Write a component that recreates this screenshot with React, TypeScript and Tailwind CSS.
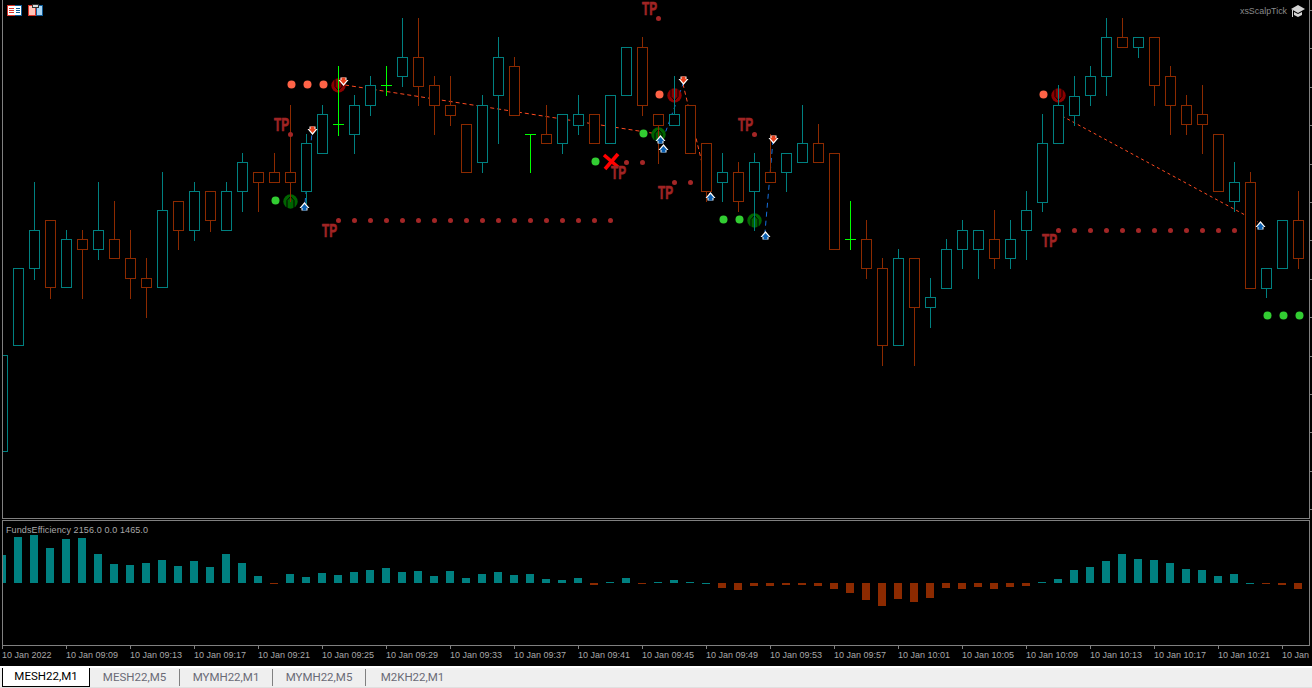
import React from "react";

const T = "#008080";
const R = "#8c2a00";
const G = "#00ff00";

// [colour, high, top, bottom, low]; index i gives centre x = 2 + 16 * i
const candles: [string, number, number, number, number][] = [
  [T, 355, 355, 451, 451],
  [T, 268, 268, 345, 345],
  [T, 182, 230, 268, 279],
  [R, 220, 220, 287, 298],
  [T, 230, 239, 287, 287],
  [R, 230, 239, 249, 298],
  [T, 182, 230, 249, 259],
  [R, 201, 239, 258, 258],
  [R, 230, 258, 278, 298],
  [R, 258, 278, 287, 317],
  [T, 172, 210, 287, 287],
  [R, 201, 201, 230, 249],
  [T, 182, 191, 230, 240],
  [R, 191, 191, 220, 231],
  [T, 182, 191, 230, 230],
  [T, 153, 162, 191, 211],
  [R, 172, 172, 182, 211],
  [R, 153, 172, 182, 182],
  [R, 105, 172, 182, 201],
  [T, 134, 143, 191, 203],
  [T, 105, 114, 153, 153],
  [G, 66, 124, 124, 135],
  [T, 95, 105, 134, 153],
  [T, 76, 85, 105, 115],
  [G, 66, 85, 85, 95],
  [T, 18, 57, 76, 86],
  [R, 18, 57, 86, 105],
  [R, 76, 85, 105, 134],
  [R, 76, 105, 115, 125],
  [R, 124, 124, 172, 172],
  [T, 95, 105, 162, 172],
  [T, 37, 57, 95, 143],
  [R, 57, 66, 115, 115],
  [G, 134, 134, 134, 172],
  [R, 105, 134, 143, 143],
  [T, 114, 114, 143, 153],
  [T, 95, 114, 125, 134],
  [R, 114, 114, 143, 143],
  [T, 95, 95, 143, 143],
  [T, 47, 47, 95, 95],
  [R, 37, 47, 105, 115],
  [R, 114, 114, 125, 163],
  [T, 76, 114, 125, 125],
  [R, 105, 105, 153, 153],
  [R, 143, 143, 191, 201],
  [T, 153, 172, 182, 201],
  [R, 162, 172, 201, 211],
  [T, 153, 162, 191, 230],
  [R, 134, 172, 182, 182],
  [T, 153, 153, 172, 191],
  [T, 105, 143, 162, 162],
  [R, 124, 143, 162, 162],
  [R, 153, 153, 249, 249],
  [G, 201, 239, 239, 249],
  [R, 220, 239, 268, 278],
  [R, 258, 268, 345, 365],
  [T, 249, 258, 345, 345],
  [R, 258, 258, 307, 365],
  [T, 278, 297, 307, 327],
  [T, 239, 249, 288, 288],
  [T, 220, 230, 249, 268],
  [T, 230, 230, 249, 278],
  [R, 210, 239, 258, 268],
  [T, 220, 239, 258, 268],
  [T, 191, 210, 230, 259],
  [T, 114, 143, 202, 211],
  [T, 85, 105, 143, 143],
  [T, 76, 96, 115, 125],
  [T, 66, 76, 95, 105],
  [T, 18, 37, 76, 95],
  [R, 18, 37, 47, 47],
  [T, 37, 37, 47, 57],
  [R, 37, 37, 85, 105],
  [R, 66, 76, 105, 134],
  [R, 95, 105, 124, 134],
  [R, 85, 114, 124, 153],
  [R, 134, 134, 191, 191],
  [T, 162, 182, 201, 211],
  [R, 172, 182, 288, 288],
  [T, 268, 268, 288, 297],
  [T, 220, 220, 268, 268],
  [R, 191, 220, 258, 268],
];

// Signed bar heights around the zero line of the lower pane
const bars = [
  28, 46, 48, 35, 44, 45, 29, 19, 18, 20, 23, 17, 22, 16, 29, 20, 7, -1, 9, 6, 10, 8, 11, 13, 15, 11, 12, 7, 12, 5, 9,
  11, 8, 9, 4, 3, 5, -2, 1, 5, -1, 1, 3, 1, 0.5, -5, -7, -3, -3, -2, -2, -3, -6, -10, -17, -23, -16, -19, -15, -5, -6,
  -4, -6, -4, -3, 1, 4, 13, 16, 22, 29, 24, 23, 20, 14, 13, 7, 9, 0.5, -1, -2, -6,
];

const timeLabels = [
  "10 Jan 2022", "10 Jan 09:09", "10 Jan 09:13", "10 Jan 09:17", "10 Jan 09:21", "10 Jan 09:25", "10 Jan 09:29",
  "10 Jan 09:33", "10 Jan 09:37", "10 Jan 09:41", "10 Jan 09:45", "10 Jan 09:49", "10 Jan 09:53", "10 Jan 09:57",
  "10 Jan 10:01", "10 Jan 10:05", "10 Jan 10:09", "10 Jan 10:13", "10 Jan 10:17", "10 Jan 10:21", "10 Jan",
];

const range = (a: number, b: number, s = 16) => {
  const out: number[] = [];
  for (let v = a; v <= b; v += s) out.push(v);
  return out;
};

const tpLabels: [number, number][] = [
  [274, 131], [322, 237], [642, 15], [611, 179], [658, 199], [738, 131], [1042, 247],
];
const brownDots: [number, number][] = [
  ...range(338, 610).map((x) => [x, 220] as [number, number]),
  ...range(1058, 1234).map((x) => [x, 230] as [number, number]),
  [290, 134], [658, 18], [626, 162], [642, 162], [674, 182], [690, 182], [754, 134],
];
const tomatoDots: [number, number][] = [[291, 84], [307, 84], [323, 84], [659, 94], [1043, 94]];
const limeDots: [number, number][] = [
  [275, 200], [595, 161], [643, 133], [723, 219], [739, 219], [1267, 315], [1283, 315], [1299, 315],
];
const downArrows: [number, number][] = [[343, 81], [312, 130], [683, 80], [773, 139]];
const upArrows: [number, number][] = [[304, 206], [660, 139], [663, 148], [710, 196], [765, 235], [1260, 225]];

function ArrowMark({ x, y, up }: { x: number; y: number; up: boolean }) {
  return (
    <g transform={`translate(${x + 0.5} ${y + 0.5}) ${up ? "scale(1 -1)" : ""}`}>
      <polygon points="-3,-4 3,-4 3,-1.5 5,-1.5 0,4.5 -5,-1.5 -3,-1.5" fill="#ffffff" />
      <polygon points="-2,-4 2,-4 2,-1.5 3.5,-1.5 0,2.6 -3.5,-1.5 -2,-1.5" fill={up ? "#0a5fb0" : "#e8401c"} />
    </g>
  );
}

function Ring({ x, y, up }: { x: number; y: number; up: boolean }) {
  return (
    <g transform={`translate(${x + 0.5} ${y + 0.5}) ${up ? "" : "scale(1 -1)"}`}>
      <circle r="7.2" fill={up ? "#006400" : "#8b0000"} />
      <path d="M-3.5 -1 L0 -5 L3.5 -1 M-3.5 -1 V7 M3.5 -1 V7" fill="none" stroke="#000000" strokeWidth="1" />
    </g>
  );
}

function MainChart() {
  return (
    <svg className="block w-[1306px] h-[518px] overflow-visible" viewBox="3 0 1306 518">
      {/* trend lines lie behind the candle bodies */}
      <g fill="none" strokeWidth="1">
        <path d="M345 85 L658 134" stroke="#ff4a20" strokeDasharray="4 3" />
        <path d="M683 84 L710 196" stroke="#ff4a20" strokeDasharray="4 3" />
        <path d="M1062 116 L1258 222" stroke="#ff4a20" strokeDasharray="3 3" />
        <path d="M663 139 L683 84" stroke="#1570e0" strokeDasharray="4 4" />
        <path d="M773 140 L765 232" stroke="#1570e0" strokeDasharray="5 4" />
        <path d="M305 203 L312 133" stroke="#1570e0" strokeDasharray="5 4" />
      </g>
      <Ring x={290} y={201} up />
      <Ring x={658} y={134} up />
      <Ring x={754} y={220} up />
      <Ring x={338} y={85} up={false} />
      <Ring x={674} y={95} up={false} />
      <Ring x={1058} y={95} up={false} />
      <g shapeRendering="crispEdges" fill="#000000" strokeWidth="1">
        {candles.map(([c, hi, top, bot, lo], i) => {
          const x = 2 + 16 * i;
          if (i === 0) {
            return <path key={i} stroke={c} fill="none" d={`M3 ${top + 0.5} H7.5 V${bot + 0.5} H3`} />;
          }
          if (c === G) {
            return (
              <g key={i} stroke={c}>
                <path d={`M${x + 0.5} ${hi} V${lo + 1} M${x - 5} ${top + 0.5} H${x + 6}`} />
              </g>
            );
          }
          return (
            <g key={i} stroke={c}>
              <path d={`M${x + 0.5} ${hi} V${lo + 1}`} />
              <rect x={x - 4.5} y={top + 0.5} width={10} height={bot - top} />
            </g>
          );
        })}
      </g>
      {brownDots.map(([x, y], i) => (
        <circle key={i} cx={x + 0.5} cy={y + 0.5} r="2.5" fill="#a32626" />
      ))}
      {tomatoDots.map(([x, y], i) => (
        <circle key={i} cx={x + 0.5} cy={y + 0.5} r="4" fill="#ff6347" />
      ))}
      {limeDots.map(([x, y], i) => (
        <circle key={i} cx={x + 0.5} cy={y + 0.5} r="4" fill="#32cd32" />
      ))}
      <path d="M604 155 L618 167 M618 154 L605 169" stroke="#ff0000" strokeWidth="3.6" fill="none" />
      {downArrows.map(([x, y], i) => (
        <ArrowMark key={i} x={x} y={y} up={false} />
      ))}
      {upArrows.map(([x, y], i) => (
        <ArrowMark key={i} x={x} y={y} up />
      ))}
      {tpLabels.map(([x, y], i) => (
        <text
          key={i}
          x={x}
          y={y}
          textLength="15"
          lengthAdjust="spacingAndGlyphs"
          fontFamily="'Liberation Sans', sans-serif"
          fontWeight="700"
          fontSize="18"
          fill="#a02424"
          stroke="#a02424"
          strokeWidth="0.7"
        >
          TP
        </text>
      ))}
      {/* toolbar icons */}
      <g shapeRendering="crispEdges">
        <rect x="7.5" y="5.5" width="14" height="10" fill="#ffffff" stroke="#d8352a" />
        <path d="M15 5.5 H21.5 V15.5 H15" fill="none" stroke="#0e5a96" />
        <path d="M9 8.5 H14 M9 10.5 H14 M9 12.5 H14" stroke="#d8352a" />
        <path d="M16 8.5 H20 M16 10.5 H20 M16 12.5 H20" stroke="#0e5a96" />
        <path d="M28.5 5.5 H35 V15.5 H28.5 Z" fill="#ffc4b8" stroke="#d8352a" />
        <path d="M36.5 5.5 H42.5 V15.5 H36.5 Z" fill="#a8d4f2" stroke="#0e5a96" />
        <rect x="32.5" y="4.5" width="6" height="3" fill="#d8d8d8" stroke="#303030" />
      </g>
      {/* mortarboard */}
      <g fill="#d4d4d4">
        <polygon points="1291,9 1298,5 1305,9 1298,13" />
        <polygon points="1294,12 1298,14 1302,12 1302,15 1298,17 1294,15" />
        <rect x="1292" y="10" width="1" height="7" />
      </g>
      <text
        x="1240"
        y="14"
        textLength="47"
        lengthAdjust="spacingAndGlyphs"
        fontFamily="'Liberation Sans', sans-serif"
        fontSize="9.5"
        fill="#8a8a8a"
      >
        xsScalpTick
      </text>
    </svg>
  );
}

function SubChart() {
  return (
    <svg className="block w-[1306px] h-[124px]" viewBox="3 521 1306 124" shapeRendering="crispEdges">
      {bars.map((v, i) => {
        const x = 2 + 16 * i;
        const first = i === 0;
        const small = Math.abs(v) < 1;
        const h = small ? 1 : Math.abs(v);
        const y = v >= 0 && !small ? 583 - v : 583;
        return (
          <rect key={i} x={first ? 3 : x - 4} y={y} width={first ? 3 : 8} height={h} fill={v > 0 ? T : R} />
        );
      })}
      <text
        x="6"
        y="533"
        textLength="142"
        lengthAdjust="spacing"
        fontFamily="'Liberation Sans', sans-serif"
        fontSize="9"
        fill="#a8a8a8"
        shapeRendering="auto"
      >
        FundsEfficiency 2156.0 0.0 1465.0
      </text>
    </svg>
  );
}

const tabs = [
  { label: "MESH22,M5", w: "w-[90px]" },
  { label: "MYMH22,M1", w: "w-[93px]" },
  { label: "MYMH22,M5", w: "w-[93px]" },
  { label: "M2KH22,M1", w: "w-[93px]" },
];

export default function App() {
  const ticks = range(10, 510, 38.4);
  return (
    <div className="w-[1312px] h-[688px] overflow-hidden bg-black font-['Liberation_Sans',sans-serif] flex flex-col">
      <div className="flex h-[519px] shrink-0 pl-[2px]">
        <div className="w-[1308px] h-[519px] border-l border-r border-b border-[#808080]">
          <MainChart />
        </div>
        <div className="flex-1 relative">
          {ticks.map((y) => (
            <div key={y} className="absolute left-0 w-[2px] h-px bg-[#808080]" style={{ top: Math.round(y) }} />
          ))}
        </div>
      </div>
      <div className="h-px shrink-0" />
      <div className="pl-[2px] shrink-0">
        <div className="w-[1308px] h-[126px] border border-[#808080]">
          <SubChart />
        </div>
      </div>
      <div className="h-[20px] shrink-0 pl-[2px] flex overflow-hidden w-[1310px]">
        {timeLabels.map((t) => (
          <div key={t} className="w-[64px] shrink-0 flex flex-col items-start">
            <div className="w-px h-[3px] bg-[#808080]" />
            <div className="text-[9px] leading-[11px] mt-[1px] text-[#a8a8a8] whitespace-nowrap">{t}</div>
          </div>
        ))}
      </div>
      <div className="h-[2px] shrink-0 bg-white" />
      <div className="h-[20px] shrink-0 bg-[#efefef] border-b border-[#e0e0e0] flex items-stretch pl-[2px] font-['Roboto',sans-serif] text-[11.5px]">
        <div className="w-[88px] h-[19px] bg-white border-l border-r border-b border-black flex items-center justify-center text-black">
          MESH22,M1
        </div>
        {tabs.map((t, i) => (
          <div key={t.label} className={`${t.w} h-[19px] flex items-center justify-center`}>
            <span className={`flex-1 text-center text-[#6a6a76] ${i < 3 ? "border-r border-[#808080]" : ""}`}>
              {t.label}
            </span>
          </div>
        ))}
      </div>
    </div>
  );
}
